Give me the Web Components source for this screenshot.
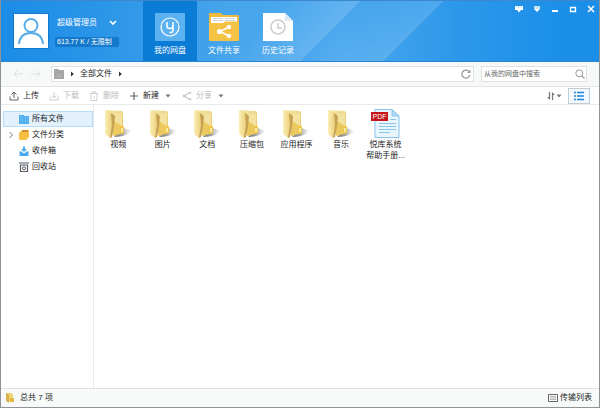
<!DOCTYPE html>
<html lang="zh-CN">
<head>
<meta charset="utf-8">
<title>我的网盘</title>
<style>
html, body { margin: 0; height: 100%; }
body { font: 8px/12px "Liberation Sans", "Noto Sans CJK SC", sans-serif; color: #1c1c1c; background: #fff; }
</style>
</head>
<body>
<disk-window>
  <disk-header slot="header">
    <user-card slot="user" name="超级管理员" quota="613.77 K / 无限制"></user-card>
    <nav-tab icon="cloud" active>我的网盘</nav-tab>
    <nav-tab icon="shared">文件共享</nav-tab>
    <nav-tab icon="history">历史记录</nav-tab>
  </disk-header>
  <address-bar slot="address" path="全部文件" hint="从我的网盘中搜索"></address-bar>
  <action-bar slot="actions">
    <action-button icon="upload">上传</action-button>
    <action-button icon="download" disabled>下载</action-button>
    <action-button icon="trash" disabled>删除</action-button>
    <action-button icon="plus" menu>新建</action-button>
    <action-button icon="share" menu disabled>分享</action-button>
  </action-bar>
  <side-nav slot="side">
    <side-item icon="building" active>所有文件</side-item>
    <side-item icon="cards" expandable>文件分类</side-item>
    <side-item icon="inbox">收件箱</side-item>
    <side-item icon="recycle">回收站</side-item>
  </side-nav>
  <file-grid slot="files">
    <file-item icon="folder">视频</file-item>
    <file-item icon="folder">图片</file-item>
    <file-item icon="folder">文档</file-item>
    <file-item icon="folder">压缩包</file-item>
    <file-item icon="folder">应用程序</file-item>
    <file-item icon="folder">音乐</file-item>
    <file-item icon="pdf">悦库系统<br>帮助手册...</file-item>
  </file-grid>
  <status-bar slot="status">总共 7 项</status-bar>
</disk-window>

<script>
const folderArt = `
  <defs>
    <linearGradient id="f" x1="0" x2="1"><stop offset="0" stop-color="#fbf0b8"/><stop offset="1" stop-color="#e6c568"/></linearGradient>
    <linearGradient id="b" x1="0" x2="1" y2="1"><stop offset="0" stop-color="#f6eaae"/><stop offset="1" stop-color="#e3c05c"/></linearGradient>
    <linearGradient id="s" x1="0" x2="1"><stop offset="0" stop-color="#777"/><stop offset="0.500" stop-color="#a5a5a5"/><stop offset="1" stop-color="#ddd" stop-opacity="0.300"/></linearGradient>
  </defs>
  <path d="M12 28 L21 19 L28 21 Q30 22 27 24 Q22 28 12 28Z" fill="url(#s)"/>
  <path d="M4 1 L19 2 Q21 2 21 4 L21 24 L12 27Z" fill="url(#b)"/>
  <path d="M12 5 L20 4 L20 20 L12 26Z" fill="#f3e2a0"/>
  <path d="M12 12 L18 16 L20 17 L20 24 L11 27Z" fill="#ebc95f"/>
  <path d="M18 18 L22 17 L22 24 L18 25Z" fill="#f1c845"/>
  <path d="M19 19 L21 19 L21 23 L19 23Z" fill="#fbeaa0"/>
  <path d="M3 1 L9 4 Q12 6 12 8 L9 28 L8 29 L3 25Z" fill="url(#f)"/>
  <path d="M9 4 L13 7 L12 18 L10 28 L8 29 L10 16Z" fill="#c6a254"/>`;

const ICONS = {
  person: [34, 34, `<g fill="none" stroke="#56ace9" stroke-width="2"><circle cx="17" cy="11.500" r="6.500"/><path d="M5 30 Q6 19 17 19 Q28 19 29 30"/></g>`],
  chevronDown: [8, 6, `<path d="M1 1 L4 4 L7 1" fill="none" stroke="#fff" stroke-width="1.6"/>`],
  cloud: [30, 30, `<rect y="1" width="30" height="28" fill="#5cb2f0"/><circle cx="15" cy="15" r="9" fill="none" stroke="#fff" stroke-width="1.2"/><path d="M12 10 V14 Q12 16.500 15 16.500 Q18 16.500 18 14 M18 10 V18 Q18 21 14.500 20.500" fill="none" stroke="#fff" stroke-width="1.5"/>`],
  shared: [30, 30, `<path d="M0 2 Q0 1 1 1 H12 L14 3 H29 Q30 3 30 4 V29 H0Z" fill="#efb93b"/><path d="M2 5 H28 V12 H2Z" fill="#fff"/><path d="M4 6.500 H14 M16 6.500 H26 M4 8.500 H14 M16 8.500 H26" stroke="#cdd3d8"/><path d="M0 11 H14 L16 9.500 H30 V29 H0Z" fill="#f5c344"/><path d="M20 15 L11 19.500 L20 24" fill="none" stroke="#fff" stroke-width="1.4"/><g fill="#fff"><circle cx="20" cy="15" r="2.200"/><circle cx="10.500" cy="19.500" r="2.600"/><circle cx="20" cy="24" r="2.200"/></g>`],
  history: [30, 30, `<path d="M0 1 H22 L30 9 V29 H0Z" fill="#fff"/><path d="M22 1 V9 H30Z" fill="#dce9f3"/><circle cx="15" cy="15" r="7" fill="none" stroke="#ccc" stroke-width="1.5"/><path d="M15 11 V16 H19" fill="none" stroke="#ccc" stroke-width="1.5"/>`],
  winTheme: [8, 8, `<path d="M0 1 H8 V5 H6 L4 7.500 L2 5 H0Z" fill="#fff"/><path d="M1 2 H7" stroke="#bcdcf6"/>`],
  winMenu: [8, 8, `<path d="M1 1 H7 V4 H1Z" fill="#c5e1f8"/><path d="M1 4 H7 L4 7Z" fill="#fff"/>`],
  winMin: [8, 8, `<path d="M1 5 H7 V7 H1Z" fill="#fff"/>`],
  winMax: [8, 8, `<path d="M1.500 2.500 H6.500 V6.500 H1.500Z" fill="none" stroke="#fff" stroke-width="1.3"/>`],
  winClose: [8, 8, `<path d="M1 1 L7 7 M7 1 L1 7" stroke="#fff" stroke-width="1.5"/>`],
  back: [10, 10, `<path d="M10 5 H1 M4.500 1.500 L1 5 L4.500 8.500" fill="none" stroke="#dcdfdf"/>`],
  forward: [10, 10, `<path d="M0 5 H9 M5.500 1.500 L9 5 L5.500 8.500" fill="none" stroke="#dcdfdf"/>`],
  disk: [10, 10, `<path d="M0 0 H4 L5 1 H10 V10 H0Z" fill="#a4a6a8"/><path d="M3 7 H4 V8 H3Z M5 5 H6 V6 H5Z M6 7 H7 V8 H6Z" fill="#e0d6bc"/>`],
  triRight: [4, 6, `<path d="M1 0.500 L3.800 3 L1 5.500Z" fill="#333"/>`],
  triDown: [6, 4, `<path d="M0.500 0.500 H5.500 L3 3.500Z" fill="#777"/>`],
  refresh: [10, 10, `<path d="M8.800 6 A4 4 0 1 1 7.800 2.400" fill="none" stroke="#999" stroke-width="1.200"/><path d="M9.500 0.500 V4 H6Z" fill="#999"/>`],
  search: [10, 10, `<circle cx="4.300" cy="4.300" r="3.500" fill="none" stroke="#999"/><path d="M6.800 6.800 L9.500 9.500" stroke="#999" stroke-width="1.2"/>`],
  upload: [10, 10, `<path d="M1 5.500 V9 H9 V5.500 M5 7 V1.500 M2.500 3.500 L5 1 L7.500 3.500" fill="none" stroke="#666"/>`],
  download: [10, 10, `<path d="M1 5.500 V9 H9 V5.500 M5 1 V6.500 M2.500 4.500 L5 7 L7.500 4.500" fill="none" stroke="#cfcfcf"/>`],
  trash: [10, 10, `<path d="M1 2.500 H9 M3.500 2 V0.800 H6.500 V2 M2 3 V9.500 H8 V3 M5 5 V7.500" fill="none" stroke="#cfcfcf"/>`],
  plus: [10, 10, `<path d="M5 1 V9 M1 5 H9" stroke="#666" stroke-width="1.2"/>`],
  share: [10, 10, `<path d="M8 1.500 L2 5 L8 8.500" fill="none" stroke="#cbcbcb" stroke-width="1.2"/><g fill="#cbcbcb"><circle cx="8" cy="1.700" r="1.200"/><circle cx="2" cy="5" r="1.400"/><circle cx="8" cy="8.300" r="1.200"/></g>`],
  sort: [8, 10, `<path d="M2.500 1 V8 M5.500 9 V2" stroke="#777" stroke-width="1.200"/><path d="M0 6 H3 V9Z M8 4 H5 V1Z" fill="#777"/>`],
  list: [10, 10, `<path d="M0 1.500 H2 M0 5 H2 M0 8.500 H2 M3 1.500 H10 M3 5 H10 M3 8.500 H10" stroke="#1e88dd" stroke-width="1.600"/>`],
  building: [10, 10, `<path d="M0 1 H5 V2 H10 V10 H0Z" fill="#52aeef"/><path d="M1 3 H4 M6 4 H9 M1 6 H4 M6 7 H9" stroke="#86c8f5" stroke-width="0.800"/>`],
  cards: [10, 10, `<path d="M3 0 H10 V7 L8 9 L7 10 H1 L0 9 V3Z" fill="#f5c040"/><path d="M3.500 1 H4.500 M5.500 1 H6.500 M7.500 1 H8.500" stroke="#9d3a22" stroke-width="1.500"/>`],
  inbox: [10, 10, `<path d="M0.500 5.500 H3 L4 7 H6 L7 5.500 H9.500 V10 H0.500Z" fill="#4dabee"/><path d="M4 0.500 H6 V3 H8 L5 6 L2 3 H4Z" fill="#4dabee"/>`],
  recycle: [10, 10, `<path d="M0 1 H10 M1.500 3 V9.500 H8.500 V3Z" fill="none" stroke="#555e66" stroke-width="1.200"/><circle cx="5" cy="6.200" r="1.500" fill="none" stroke="#555e66"/>`],
  chevronRight: [6, 8, `<path d="M1.500 1 L4.500 4 L1.500 7" fill="none" stroke="#777"/>`],
  folder: [32, 30, folderArt],
  pdf: [32, 30, `<path d="M5 0.500 H22 L29 7 V28.500 H5Z" fill="#e9f5fd" stroke="#86c3ea"/><path d="M22 1 V7 H29Z" fill="#b4dbf4" stroke="#6fb5e2" stroke-width="0.600"/><path d="M20 10.500 H26 M9 14.500 H26 M9 17.500 H26 M9 20.500 H26 M9 23.500 H20" stroke="#8cc4e8"/><path d="M1 3 H18 V12 H1Z" fill="#c4161c"/><text x="9.500" y="10" text-anchor="middle" font-family="Liberation Sans, sans-serif" font-size="7" fill="#fff">PDF</text>`],
  folderSmall: [10, 10, `<path d="M1 0 H7 L8 2 V8 L3 9Z" fill="#eed278"/><path d="M1 0 L4 2 V10 L1 8Z" fill="#d9b14c"/><path d="M5 5 H9 V9 H5Z" fill="#e7b93e"/>`],
  transfer: [10, 10, `<path d="M0.500 1.500 H9.500 V8.500 H0.500Z" fill="#fafafa" stroke="#666"/><path d="M2 3.500 H8 M2 5 H8 M2 6.500 H8" stroke="#999" stroke-width="0.700"/>`]
};

const BASE = `:host,*{box-sizing:border-box}
button{font:inherit;color:inherit;background:none;border:0;padding:0;margin:0;display:flex;align-items:center;white-space:nowrap}`;

function define(tag, render) {
  customElements.define(tag, class extends HTMLElement {
    connectedCallback() {
      if (this.shadowRoot) return;
      const t = document.createElement('template');
      t.innerHTML = render(this);
      this.attachShadow({ mode: 'open' }).append(t.content.cloneNode(true));
    }
  });
}

define('ui-icon', el => {
  const [w, h, art] = ICONS[el.getAttribute('name')];
  return `<style>:host{display:block;flex:none}svg{display:block}</style>
  <svg width="${w}" height="${h}" viewBox="0 0 ${w} ${h}" aria-hidden="true">${art}</svg>`;
});

define('disk-window', () => `<style>${BASE}
  :host{display:flex;flex-direction:column;min-height:100vh;border:1px solid #8e9398;border-top-color:#3f87cc;background:#fff}
  .body{flex:1;display:flex}
  main{flex:1;min-width:0}
  </style>
  <slot name="header"></slot><slot name="address"></slot><slot name="actions"></slot>
  <div class="body"><slot name="side"></slot><main><slot name="files"></slot></main></div>
  <slot name="status"></slot>`);

define('disk-header', () => `<style>${BASE}
  :host{display:block;color:#fff;
    background:
      linear-gradient(135deg,transparent 200px,#ffffff24 254px,transparent 254px),
      linear-gradient(135deg,transparent 254px,#ffffff24 313px,transparent 313px),
      linear-gradient(90deg,#1b8ce6 0,#2c96e8 18%,#46a5ec 38%,#4ca8ee 56%,#2d98ea 76%,#1b8fe8 94%)}
  header{display:flex;height:61px;border-bottom:1px solid #2585d6}
  nav{display:flex;flex:1}
  .win{display:flex;gap:2px;height:16px}
  .win button{width:16px;justify-content:center}
  </style>
  <header><slot name="user"></slot><nav><slot></slot></nav>
  <div class="win">
    <button aria-label="换肤"><ui-icon name="winTheme"></ui-icon></button>
    <button aria-label="菜单"><ui-icon name="winMenu"></ui-icon></button>
    <button aria-label="最小化"><ui-icon name="winMin"></ui-icon></button>
    <button aria-label="最大化"><ui-icon name="winMax"></ui-icon></button>
    <button aria-label="关闭"><ui-icon name="winClose"></ui-icon></button>
  </div></header>`);

define('user-card', el => `<style>${BASE}
  :host{display:flex;gap:6px;width:142px;padding:12px 0 0 12px}
  .avatar{width:36px;height:36px;background:#fff;border:1px solid #1379cc}
  .name{gap:12px;padding:4px 0 0 2px}
  .quota{margin-top:8px;padding:0 2px;width:64px;height:10px;line-height:10px;font-size:7px;background:#1579cb;border-radius:2px;white-space:nowrap}
  </style>
  <button class="avatar" aria-label="头像"><ui-icon name="person"></ui-icon></button>
  <div><button class="name"><span>${el.getAttribute('name')}</span><ui-icon name="chevronDown"></ui-icon></button>
  <div class="quota">${el.getAttribute('quota')}</div></div>`);

define('nav-tab', el => `<style>${BASE}
  :host{display:flex;width:54px}
  :host([active]){background:#0b7cd6}
  button{flex:1;flex-direction:column;padding-top:11px;gap:3px}
  </style>
  <button><ui-icon name="${el.getAttribute('icon')}"></ui-icon><span><slot></slot></span></button>`);

define('address-bar', el => `<style>${BASE}
  :host{display:flex;align-items:center;height:25px;padding:0 12px;background:#f7f9f9;border-bottom:1px solid #e3e5e5}
  .nav{display:flex;gap:8px;width:38px}
  .path,.search{display:flex;align-items:center;height:16px;background:#fff;border:1px solid #dfe2e3}
  .path{flex:1;padding:0 2px;gap:6px;margin-right:7px}
  .path .refresh{margin-left:auto}
  .search{width:106px;padding:0 1px 0 2px}
  input{flex:1;min-width:0;border:0;padding:0;background:none;font:inherit;font-size:7px;outline:0}
  input::placeholder{color:#666;opacity:1}
  </style>
  <div class="nav"><button aria-label="后退"><ui-icon name="back"></ui-icon></button><button aria-label="前进"><ui-icon name="forward"></ui-icon></button></div>
  <div class="path"><ui-icon name="disk"></ui-icon><ui-icon name="triRight"></ui-icon><button>${el.getAttribute('path')}</button><ui-icon name="triRight"></ui-icon>
  <button class="refresh" aria-label="刷新"><ui-icon name="refresh"></ui-icon></button></div>
  <form class="search" onsubmit="return false"><input type="text" aria-label="${el.getAttribute('hint')}" placeholder="${el.getAttribute('hint')}"><button aria-label="搜索"><ui-icon name="search"></ui-icon></button></form>`);

define('action-bar', () => `<style>${BASE}
  :host{display:flex;align-items:center;gap:10px;height:18px;padding:0 9px 0 8px;border-bottom:1px solid #e8eaea}
  .view{margin-left:auto;display:flex;gap:6px}
  .sort{gap:1px}
  .list{width:22px;height:16px;justify-content:center;border:1px solid #c3cdd5;background:#f4f9fd}
  </style>
  <slot></slot>
  <div class="view"><button class="sort" aria-label="排序"><ui-icon name="sort"></ui-icon><ui-icon name="triDown"></ui-icon></button>
  <button class="list" aria-label="列表视图"><ui-icon name="list"></ui-icon></button></div>`);

define('action-button', el => `<style>${BASE}
  :host{display:block}
  button{gap:4px}
  .caret{padding:0 1px 0 2px}
  button:disabled{color:#bcbcbc}
  </style>
  <button ${el.hasAttribute('disabled') ? 'disabled' : ''}><ui-icon name="${el.getAttribute('icon')}"></ui-icon><span><slot></slot></span>${el.hasAttribute('menu') ? '<ui-icon class="caret" name="triDown"></ui-icon>' : ''}</button>`);

define('side-nav', () => `<style>${BASE}
  :host{display:block;width:93px;padding:6px 0 0 2px;border-right:1px solid #e6eaec}
  </style><nav><slot></slot></nav>`);

define('side-item', el => `<style>${BASE}
  :host{display:block}
  button{width:100%;height:16px;gap:3px;border:1px solid transparent}
  :host([active]) button{background:#e2f1fc;border-color:#b4dbf7}
  .twist{width:12px;padding-left:4px}
  </style>
  <button><span class="twist">${el.hasAttribute('expandable') ? '<ui-icon name="chevronRight"></ui-icon>' : ''}</span><ui-icon name="${el.getAttribute('icon')}"></ui-icon><span><slot></slot></span></button>`);

define('file-grid', () => `<style>
  :host{display:grid;grid-template-columns:repeat(auto-fill,minmax(44px,1fr));padding:4px 13px 0 2px}
  </style><slot></slot>`);

define('file-item', el => `<style>${BASE}
  :host{display:block}
  button{width:100%;flex-direction:column;line-height:11px}
  </style>
  <button><ui-icon name="${el.getAttribute('icon')}"></ui-icon><span><slot></slot></span></button>`);

define('status-bar', () => `<style>${BASE}
  :host{display:flex;align-items:center;gap:5px;height:19px;padding:0 7px 0 4px;background:#f7faf9;border-top:1px solid #e0e3e3}
  .transfer{margin-left:auto;gap:2px}
  </style>
  <ui-icon name="folderSmall"></ui-icon><span><slot></slot></span>
  <button class="transfer"><ui-icon name="transfer"></ui-icon><span>传输列表</span></button>`);
</script>
</body>
</html>
